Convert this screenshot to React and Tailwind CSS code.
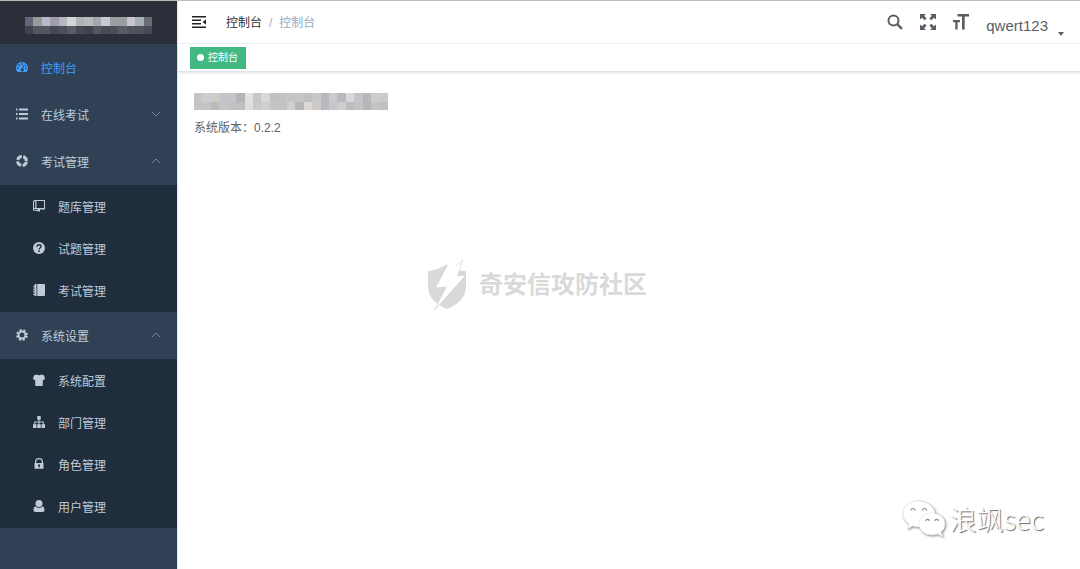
import React from "react";

const FONT = "font-['Liberation_Sans','Noto_Sans_CJK_SC',sans-serif]";

function Icon({ children, className = "size-3" }) {
  return (
    <svg viewBox="0 0 24 24" fill="currentColor" aria-hidden="true" className={`shrink-0 ${className}`}>
      {children}
    </svg>
  );
}

const DashboardIcon = () => (
  <Icon>
    <path
      fillRule="evenodd"
      d="M12 2A12 12 0 0 0 0 14c0 2.700.8 5.100 2.200 7.200.3.500.800.800 1.400.800h16.800c.600 0 1.100-.300 1.400-.800A12.800 12.800 0 0 0 24 14 12 12 0 0 0 12 2zM4 12.500a1.700 1.700 0 1 1 0 3.400 1.700 1.700 0 0 1 0-3.400zM6.300 6.700a1.700 1.700 0 1 1 0 3.400 1.700 1.700 0 0 1 0-3.400zM12 4.200a1.700 1.700 0 1 1 0 3.400 1.700 1.700 0 0 1 0-3.400zM18.500 7.300a1.500 1.500 0 1 1 0 3 1.500 1.500 0 0 1 0-3zM20 12.500a1.700 1.700 0 1 1 0 3.400 1.700 1.700 0 0 1 0-3.400zM14 8.500l1.800.500-1.500 6.300a3 3 0 1 1-1.800-.500z"
    />
  </Icon>
);

const ListIcon = () => (
  <Icon>
    <path d="M0 1h3v4H0zM6 1h18v4H6zM0 10h3v4H0zM6 10h18v4H6zM0 19h3v4H0zM6 19h18v4H6z" />
  </Icon>
);

const RingIcon = () => (
  <Icon>
    <circle cx="12" cy="12" r="8.800" fill="none" stroke="currentColor" strokeWidth="6" strokeDasharray="10.820 3" strokeDashoffset="-1.500" />
  </Icon>
);

const BookIcon = () => (
  <Icon>
    <path
      fillRule="evenodd"
      d="M3.500 0H24v19H14v5l-2.500-2L9 24v-2H3a3 3 0 0 1-3-3V3.500A3.500 3.500 0 0 1 3.500 0zM2 3v13.500l2.500-.5V2.500zM7 2v14h15V2zM3 18.500a1 1 0 0 0 0 2h6v-2z"
    />
  </Icon>
);

const QuestionIcon = () => (
  <Icon>
    <circle cx="12" cy="12" r="12" />
    <path d="M8 9.300C8 6.700 9.700 5.500 12 5.500s4 1.300 4 3.500c0 2.900-4 2.900-4 5.800" fill="none" stroke="#1f2d3d" strokeWidth="2.800" />
    <circle cx="12" cy="18.300" r="1.800" fill="#1f2d3d" />
  </Icon>
);

const NotebookIcon = () => (
  <Icon>
    <path d="M8.500 0H22a2 2 0 0 1 2 2v20a2 2 0 0 1-2 2H8.500z" />
    <path d="M3 0h4v24H3v-2.500H0v-2h3v-3H0v-2h3v-3H0v-2h3v-3H0v-2h3z" />
  </Icon>
);

const GearIcon = () => (
  <Icon>
    <circle cx="12" cy="12" r="7" fill="none" stroke="currentColor" strokeWidth="4" />
    <circle cx="12" cy="12" r="10" fill="none" stroke="currentColor" strokeWidth="3.600" strokeDasharray="4.200 3.654" strokeDashoffset="-1.800" />
  </Icon>
);

const ShirtIcon = () => (
  <Icon>
    <path d="M7.500 1c2 2.200 7 2.200 9 0L22 2.500l2 7.500-4.500 3V24h-15V13L0 10l2-7.500z" />
  </Icon>
);

const TreeIcon = () => (
  <Icon>
    <path d="M8.500 0h7v7.500H13V11h8.500v5.500H24V24h-7v-7.500h2.500V13H13v3.500h2.500V24h-7v-7.500H11V13H4.500v3.500H7V24H0v-7.500h2.500V11H11V7.500H8.500z" />
  </Icon>
);

const LockIcon = () => (
  <Icon>
    <path
      fillRule="evenodd"
      d="M4 10V8a8 8 0 0 1 16 0v2h1v11.500H3V10zm2.500 0h11V8a5.500 5.500 0 0 0-11 0zM10 13v3l1 .500V19h2.500v-2.500L14 16v-3z"
    />
  </Icon>
);

const UserIcon = () => (
  <Icon>
    <circle cx="12" cy="7" r="7" />
    <path d="M5 12.500c3.500 4 10.500 4 14 0 3 1.200 4 4.200 4 7.500 0 2.400-1.300 4-3.500 4h-15C2.300 24 1 22.400 1 20c0-3.300 1-6.300 4-7.500z" />
  </Icon>
);

function Chevron({ up }) {
  return (
    <svg viewBox="0 0 10 10" fill="none" stroke="#76859a" className="ml-auto size-[10px] shrink-0" aria-hidden="true">
      <path d={up ? "M1 7l4-4 4 4" : "M1 3l4 4 4-4"} />
    </svg>
  );
}

const EXAM_ITEMS = [
  { label: "题库管理", icon: BookIcon },
  { label: "试题管理", icon: QuestionIcon },
  { label: "考试管理", icon: NotebookIcon },
];

const SYSTEM_ITEMS = [
  { label: "系统配置", icon: ShirtIcon },
  { label: "部门管理", icon: TreeIcon },
  { label: "角色管理", icon: LockIcon },
  { label: "用户管理", icon: UserIcon },
];

function Group({ label, icon: Glyph, items }) {
  return (
    <li>
      <button type="button" aria-expanded={Boolean(items)} className="flex h-[47px] w-full items-center gap-[13px] pr-4 pb-0.5 pl-4 text-left">
        <Glyph />
        <span className="pt-1">{label}</span>
        <Chevron up={Boolean(items)} />
      </button>
      {items && (
        <ul className="bg-[#1f2d3d] pt-px">
          {items.map(({ label: text, icon: ItemGlyph }) => (
            <li key={text}>
              <a href="#" className="flex h-[42px] items-center gap-[13px] pb-0.5 pl-[33px]">
                <ItemGlyph />
                <span className="pt-1">{text}</span>
              </a>
            </li>
          ))}
        </ul>
      )}
    </li>
  );
}

function Mosaic({ rows, label, className }) {
  return (
    <svg
      viewBox={`0 0 ${rows[0].length} 2`}
      preserveAspectRatio="none"
      shapeRendering="crispEdges"
      role="img"
      aria-label={label}
      className={className}
    >
      {rows.map((row, y) => row.map((fill, x) => <rect key={`${x}-${y}`} x={x} y={y} width="1" height="1" fill={fill} />))}
    </svg>
  );
}

const LOGO_CELLS = [
  ["#626477", "#999b98", "#b7bbc7", "#a29dac", "#b7b6bd", "#d1d6d8", "#b1b2b6", "#b7bbc0", "#a5a7ac", "#c5c9d0", "#9b9fa2", "#9c9da2", "#c7c5ca", "#a9adb4", "#6c6d72"],
  ["#40424f", "#53555f", "#53555f", "#464856", "#4d4f5b", "#595c66", "#484753", "#40434f", "#53565f", "#484b56", "#4c4e59", "#585a66", "#51535e", "#4e505c", "#474954"],
];

const TITLE_CELLS = [
  ["#c6c6c7", "#cccdd1", "#cbcdc8", "#c2c6ca", "#c6c5c7", "#b5b5b6", "#e0e1e1", "#c8c8c9", "#d9d8d7", "#c1c1c3", "#c3c3c5", "#c6c5c6", "#c6c4c4", "#bfc0c0", "#c8c8cb", "#b8b9be", "#cbcbcd", "#b9babd", "#d9d9da", "#c4c5c8", "#b7b8b9", "#cdcdcf", "#cacaca"],
  ["#c4c4c5", "#c4c4c4", "#bcbbb7", "#c5c5c6", "#c1c1c3", "#bfbfc1", "#dddedf", "#cbc9c6", "#cfcfd1", "#c5c5c6", "#c3c3c4", "#ced0d1", "#b5b6b7", "#d8d9d8", "#cfcac5", "#b9babf", "#c6c7ca", "#cdced0", "#bcbdbf", "#c2c3c5", "#b6b6b8", "#c5c5c6", "#c0c0c2"],
];

function Sidebar() {
  return (
    <aside className="w-[177px] shrink-0 bg-[#304156] text-xs text-[#bfcbd9]">
      <div className="flex h-[43px] items-center justify-center bg-[#2b2f3a]">
        <Mosaic rows={LOGO_CELLS} label="系统标志" className="mt-1.5 h-[17px] w-[127px]" />
      </div>
      <nav aria-label="主菜单">
        <ul>
          <li>
            <a href="#" aria-current="page" className="flex h-[47px] items-center gap-[13px] pb-0.5 pl-4 text-[#409eff]">
              <DashboardIcon />
              <span className="pt-1">控制台</span>
            </a>
          </li>
          <Group label="在线考试" icon={ListIcon} />
          <Group label="考试管理" icon={RingIcon} items={EXAM_ITEMS} />
          <Group label="系统设置" icon={GearIcon} items={SYSTEM_ITEMS} />
        </ul>
      </nav>
    </aside>
  );
}

function Header() {
  return (
    <header className="flex h-[43px] items-center border-b border-[#f3f4f5] pr-4 pl-[14px]">
      <button type="button" aria-label="折叠菜单" className="text-[#222]">
        <svg viewBox="0 0 14 12" fill="currentColor" className="h-3 w-[14px]" aria-hidden="true">
          <path d="M0 0h14v1.500H0zM0 3.500h9V5H0zM0 7h9v1.500H0zM0 10.500h14V12H0zM14 3.500v5L10.500 6z" />
        </svg>
      </button>
      <nav aria-label="面包屑" className="ml-5 flex items-center gap-[7px] pt-0.5 text-xs">
        <a href="#" className="text-[#303133]">控制台</a>
        <span className="text-[#a8afbd]">/</span>
        <span className="text-[#97a8be]">控制台</span>
      </nav>
      <div className="ml-auto flex items-center gap-[17px] text-[#5a5e66]">
        <button type="button" aria-label="搜索">
          <svg viewBox="0 0 16 16" fill="none" stroke="currentColor" className="size-4" aria-hidden="true">
            <circle cx="6.500" cy="6.500" r="5" strokeWidth="2" />
            <path d="M10.200 10.200l4.800 4.600" strokeWidth="2.400" />
          </svg>
        </button>
        <button type="button" aria-label="全屏">
          <svg viewBox="0 0 16 16" fill="currentColor" className="size-4" aria-hidden="true">
            <path d="M0 0h6L4.200 1.800 6.600 4.400 4.700 6.300 2 3.800 0 5.600zM16 0v5.600L14 3.800l-2.700 2.500-1.900-1.900 2.400-2.600L10 0zM0 16v-5.600l2 1.800 2.700-2.500 1.900 1.900-2.400 2.600L6 16zM16 16h-6l1.800-1.800-2.400-2.600 1.900-1.900 2.700 2.500 2-1.800z" />
          </svg>
        </button>
        <button type="button" aria-label="字号">
          <svg viewBox="0 0 16 16" fill="currentColor" className="size-4" aria-hidden="true">
            <path d="M4.500 0H16v2.500h-4.300V15.500H9V2.500H4.500zM0 6h7v2.200H4.600v7.300H2.300V8.200H0z" />
          </svg>
        </button>
        <button type="button" className="mt-2 flex items-end gap-2.5 text-[15px] leading-5">
          qwert123
          <svg viewBox="0 0 6 4" fill="currentColor" className="h-1 w-1.5" aria-hidden="true">
            <path d="M0 0h6L3 4z" />
          </svg>
        </button>
      </div>
    </header>
  );
}

function ShieldMark() {
  return (
    <svg viewBox="0 0 40 52" className="h-[52px] w-10" aria-hidden="true">
      <path d="M1 12.500C8 11 14 9 20 5.500c6 4 12 6 19 7v15c0 11-8 18-19 22.500C9 45.500 1 38 1 27.500z" fill="#d9d9d9" />
      <path d="M21 6L35.500 1 30 17.500l8-1L7.500 51 20 27.500 9 28.500z" fill="#fff" />
      <path d="M29 7L35.500 1 32.500 11M12 43L7.500 51l7-7" fill="none" stroke="#e2e2e2" />
    </svg>
  );
}

function ChatMark() {
  return (
    <svg viewBox="0 0 44 38" className="h-[38px] w-11 drop-shadow-[1px_1px_1px_#888]" fill="#fff" stroke="#ddd" strokeWidth="0.500" aria-hidden="true">
      <path d="M16 1C7 1 1 7 1 14c0 4 2 7 6 10l-2 5 6-3c2 .7 4 1 7 1 9 0 15-6 15-13S25 1 16 1z" />
      <path d="M30 13c-8 0-13 5-13 11s5 11 13 11c2 0 4-.3 6-1l5 3-2-5c3-2 4-5 4-8 0-6-5-11-13-11z" />
      <g fill="none" stroke="#8c8c8c" strokeWidth="1.200">
        <path d="M9 10.500a2 2 0 0 1 4 0M20.500 10.500a2 2 0 0 1 4 0M24 21a1.700 1.700 0 0 1 3.400 0M33 21a1.700 1.700 0 0 1 3.400 0" />
      </g>
    </svg>
  );
}

export default function App() {
  return (
    <div className={`relative flex min-h-screen border-t border-[#b9bbb9] bg-white ${FONT}`}>
      <Sidebar />
      <div className="min-w-0 flex-1 border-l border-[#e4e7ec]">
        <Header />
        <div className="flex h-7 items-center border-b border-[#dfe2e8] pl-3 shadow-[0_1px_3px_0_rgba(0,0,0,0.12)]">
          <a href="#" className="flex h-[22px] items-center gap-1 bg-[#42b983] pr-2 pl-[7px] text-[10px] text-white">
            <span className="size-[7px] rounded-full bg-white" />
            控制台
          </a>
        </div>
        <main className="px-4 pt-[21px] text-xs text-[#606266]">
          <Mosaic rows={TITLE_CELLS} label="系统名称" className="h-[17px] w-[194px]" />
          <p className="mt-2 leading-5">系统版本：0.2.2</p>
        </main>
      </div>
      <div className="pointer-events-none absolute top-[258px] left-[427px] flex items-center gap-3 text-2xl font-bold text-[#d9d9d9]">
        <ShieldMark />
        <span>奇安信攻防社区</span>
      </div>
      <div className="pointer-events-none absolute right-9 bottom-[30px] flex items-center gap-1 font-['Noto_Sans_CJK_SC',sans-serif] text-[27px] leading-10 font-light text-white">
        <ChatMark />
        <span className="[text-shadow:1px_1px_1px_#666]">浪飒sec</span>
      </div>
    </div>
  );
}
